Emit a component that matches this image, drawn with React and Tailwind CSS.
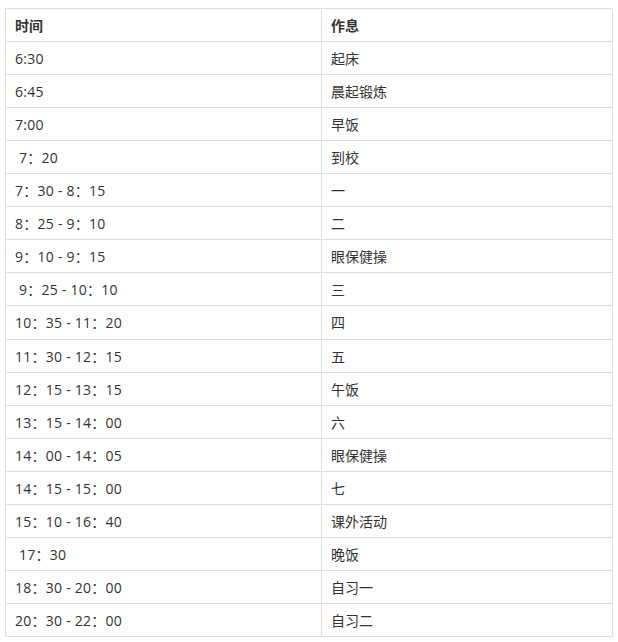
import React from "react";

const rows = [
  ["6:30", "起床"],
  ["6:45", "晨起锻炼"],
  ["7:00", "早饭"],
  ["\u00a07：20", "到校"],
  ["7：30 - 8：15", "一"],
  ["8：25 - 9：10", "二"],
  ["9：10 - 9：15", "眼保健操"],
  ["\u00a09：25 - 10：10", "三"],
  ["10：35 - 11：20", "四"],
  ["11：30 - 12：15", "五"],
  ["12：15 - 13：15", "午饭"],
  ["13：15 - 14：00", "六"],
  ["14：00 - 14：05", "眼保健操"],
  ["14：15 - 15：00", "七"],
  ["15：10 - 16：40", "课外活动"],
  ["\u00a017：30", "晚饭"],
  ["18：30 - 20：00", "自习一"],
  ["20：30 - 22：00", "自习二"],
];

export default function App() {
  return (
    <div
      className="w-[618px] h-[642px] bg-white pt-[8px] pl-[5px]"
      style={{ fontFamily: '"Open Sans", "Noto Sans CJK SC", sans-serif' }}
    >
      <div className="w-[607px] border-t border-l border-[#dddddd] text-[14px] text-[#333333]">
        <div className="grid grid-cols-[316px_291px]">
          <div className="h-[33px] border-r border-b border-[#dddddd] pl-[9px] flex items-center font-bold">
            时间
          </div>
          <div className="h-[33px] border-r border-b border-[#dddddd] pl-[9px] flex items-center font-bold">
            作息
          </div>
        </div>
        {rows.map(([t, a], i) => (
          <div key={i} className="grid grid-cols-[316px_291px]">
            <div
              className={
                (i === 8
                  ? "h-[34px] "
                  : "h-[33px] ") +
                "border-r border-b border-[#dddddd] pl-[9px] flex items-center whitespace-pre tracking-[0.25px]"
              }
            >
              {t}
            </div>
            <div
              className={
                (i === 8 ? "h-[34px] " : "h-[33px] ") +
                "border-r border-b border-[#dddddd] pl-[9px] flex items-center"
              }
            >
              {a}
            </div>
          </div>
        ))}
      </div>
    </div>
  );
}
